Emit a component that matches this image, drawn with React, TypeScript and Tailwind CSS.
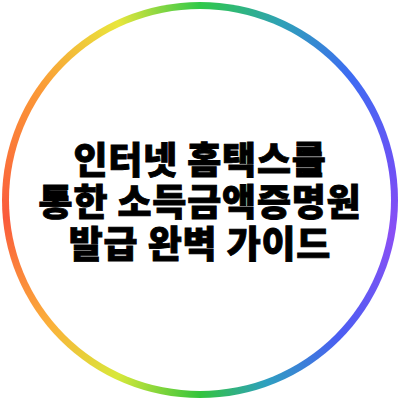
export default function App() {
  return (
    <div className="w-[400px] h-[400px] bg-white flex items-center justify-center">
      <div className="w-[396px] h-[396px] rounded-full p-[7px] bg-[conic-gradient(#2fc948,#2fa0b8_25deg,#3d6cf2_50deg,#6b52f5_80deg,#8a4ff5_100deg,#4a5ef2_135deg,#2e9fc0_160deg,#33c43c_180deg,#d8e83a_205deg,#fbb13a_230deg,#fa5a3c_265deg,#fb9a36_305deg,#e9e63c_335deg,#2fc948)]">
        <div className="w-full h-full rounded-full bg-white flex items-center justify-center">
          <h1 className="text-center text-black font-black text-[37px] leading-[42px] tracking-[0.8px] [-webkit-text-stroke:0.9px_black] font-['Noto_Sans_CJK_KR_Black','Noto_Sans_CJK_KR','Noto_Sans',sans-serif]">
            인터넷 홈택스를
            <br />
            통한 소득금액증명원
            <br />
            발급 완벽 가이드
          </h1>
        </div>
      </div>
    </div>
  );
}
